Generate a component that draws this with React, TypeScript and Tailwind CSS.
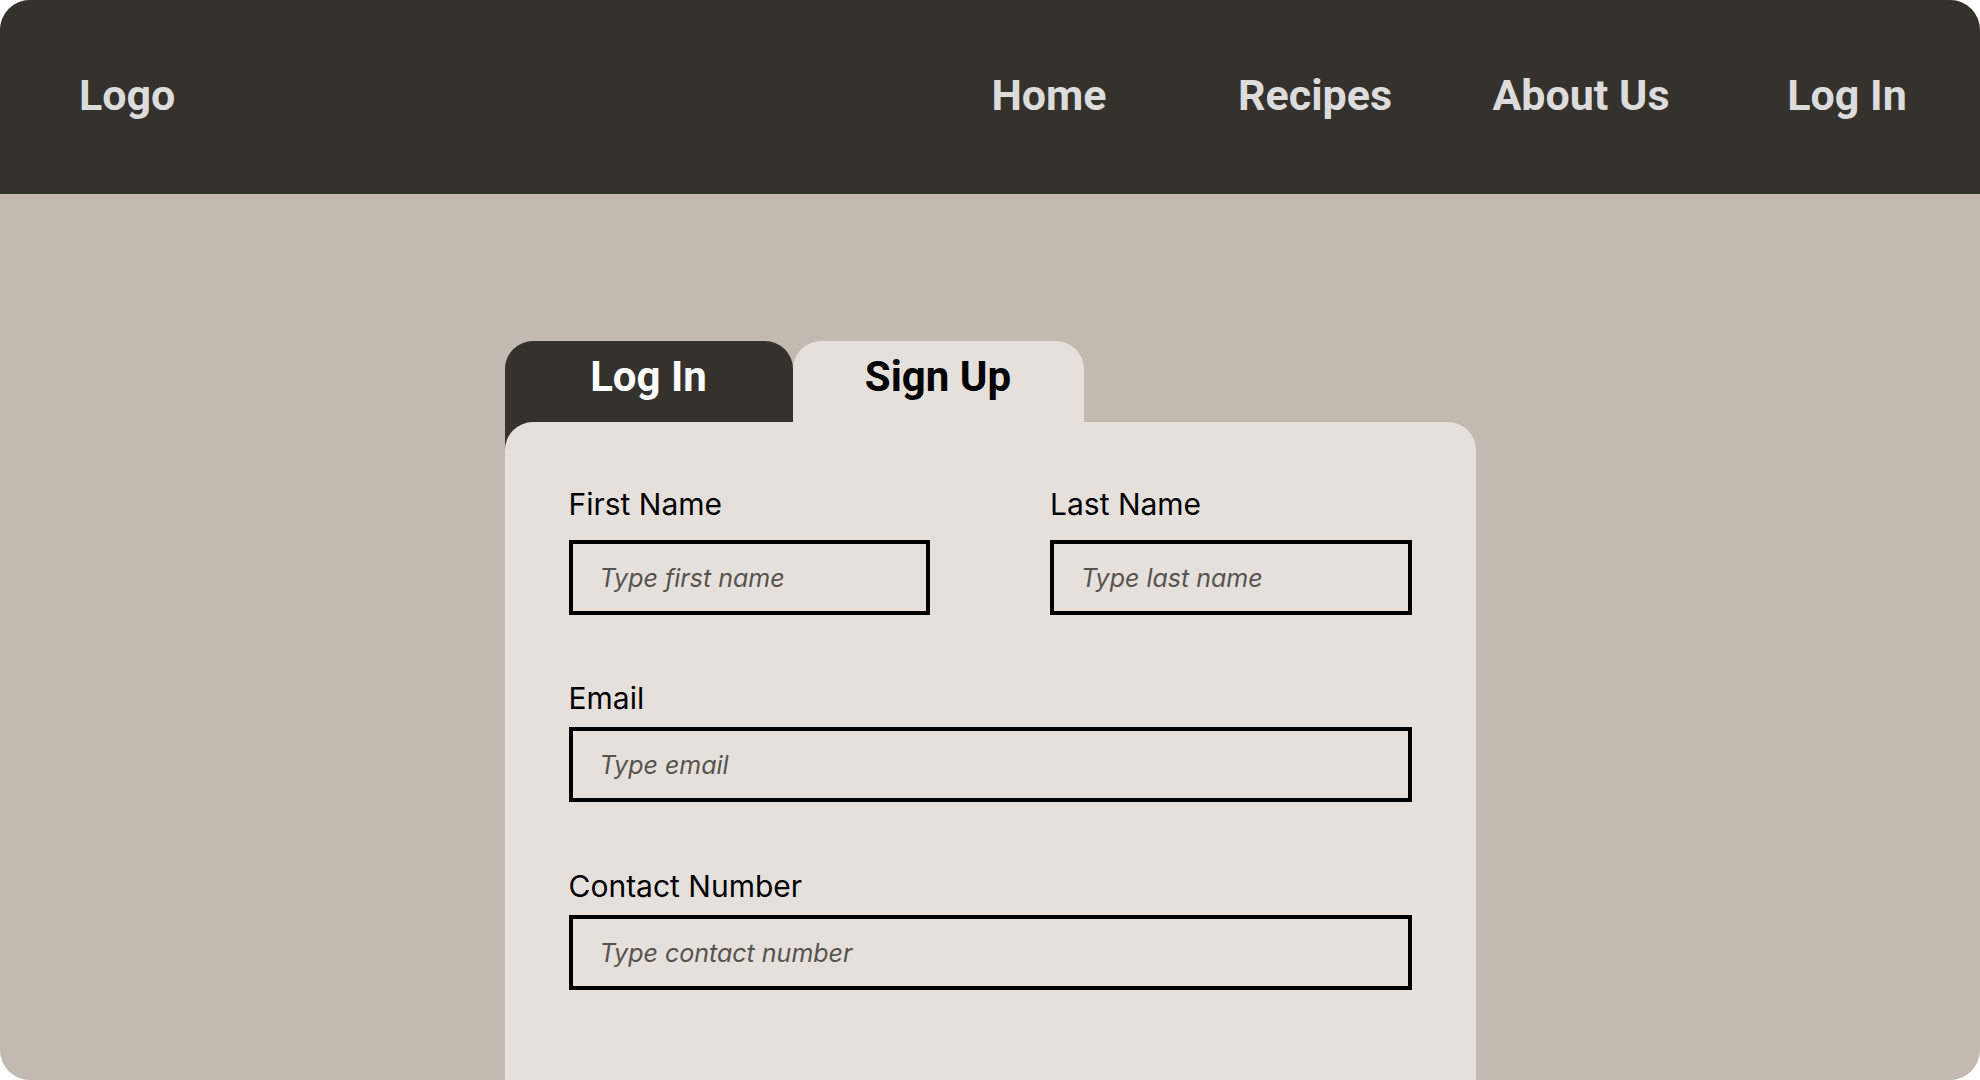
const navItems = ['Home', 'Recipes', 'About Us', 'Log In'];

function Field({ label, placeholder, first = false }: { label: string; placeholder: string; first?: boolean }) {
  return (
    <div className="flex flex-col">
      <label className="text-[30px] leading-none text-black">{label}</label>
      <input
        type="text"
        placeholder={placeholder}
        className={`${first ? 'mt-[21px]' : 'mt-[14px]'} h-[75px] w-full border-4 border-black bg-transparent pl-[27px] text-[25px] text-black outline-none placeholder:italic placeholder:text-[#57534e]`}
      />
    </div>
  );
}

export default function App() {
  return (
    <div className="h-[1080px] w-full overflow-hidden bg-white">
      <div className="flex h-full flex-col overflow-hidden rounded-[30px] bg-[#c2b9b0] font-['Inter',sans-serif]">
        <header className="flex h-[194px] shrink-0 items-center justify-between bg-[#35312c] pb-[4px] pl-[79px] font-['Roboto',sans-serif] text-[43px] font-bold leading-none text-[#dcdcdc]">
          <span>Logo</span>
          <nav className="grid w-[1064px] grid-cols-4">
            {navItems.map((item) => (
              <a key={item} href="#" className="text-center">
                {item}
              </a>
            ))}
          </nav>
        </header>

        <main className="flex flex-1 flex-col pt-[147px]">
          <div className="mx-auto flex w-[971px] flex-1 flex-col">
            <div className="flex h-[109px] shrink-0 font-['Roboto',sans-serif] text-[42px] font-bold leading-none">
              <button className="flex w-[288px] justify-center rounded-t-[28px] bg-[#35312c] pt-[15px] text-white">
                Log In
              </button>
              <button className="flex w-[291px] justify-center rounded-t-[28px] bg-[#e5e0db] pt-[15px] text-black">
                Sign Up
              </button>
            </div>

            <form className="relative -mt-[28px] flex-1 rounded-t-[28px] bg-[#e5e0db] px-[64px] pt-[67px]">
              <div className="grid grid-cols-2 gap-x-[120px]">
                <Field label="First Name" placeholder="Type first name" first />
                <Field label="Last Name" placeholder="Type last name" first />
              </div>
              <div className="mt-[68px]">
                <Field label="Email" placeholder="Type email" />
              </div>
              <div className="mt-[69px]">
                <Field label="Contact Number" placeholder="Type contact number" />
              </div>
            </form>
          </div>
        </main>
      </div>
    </div>
  );
}
